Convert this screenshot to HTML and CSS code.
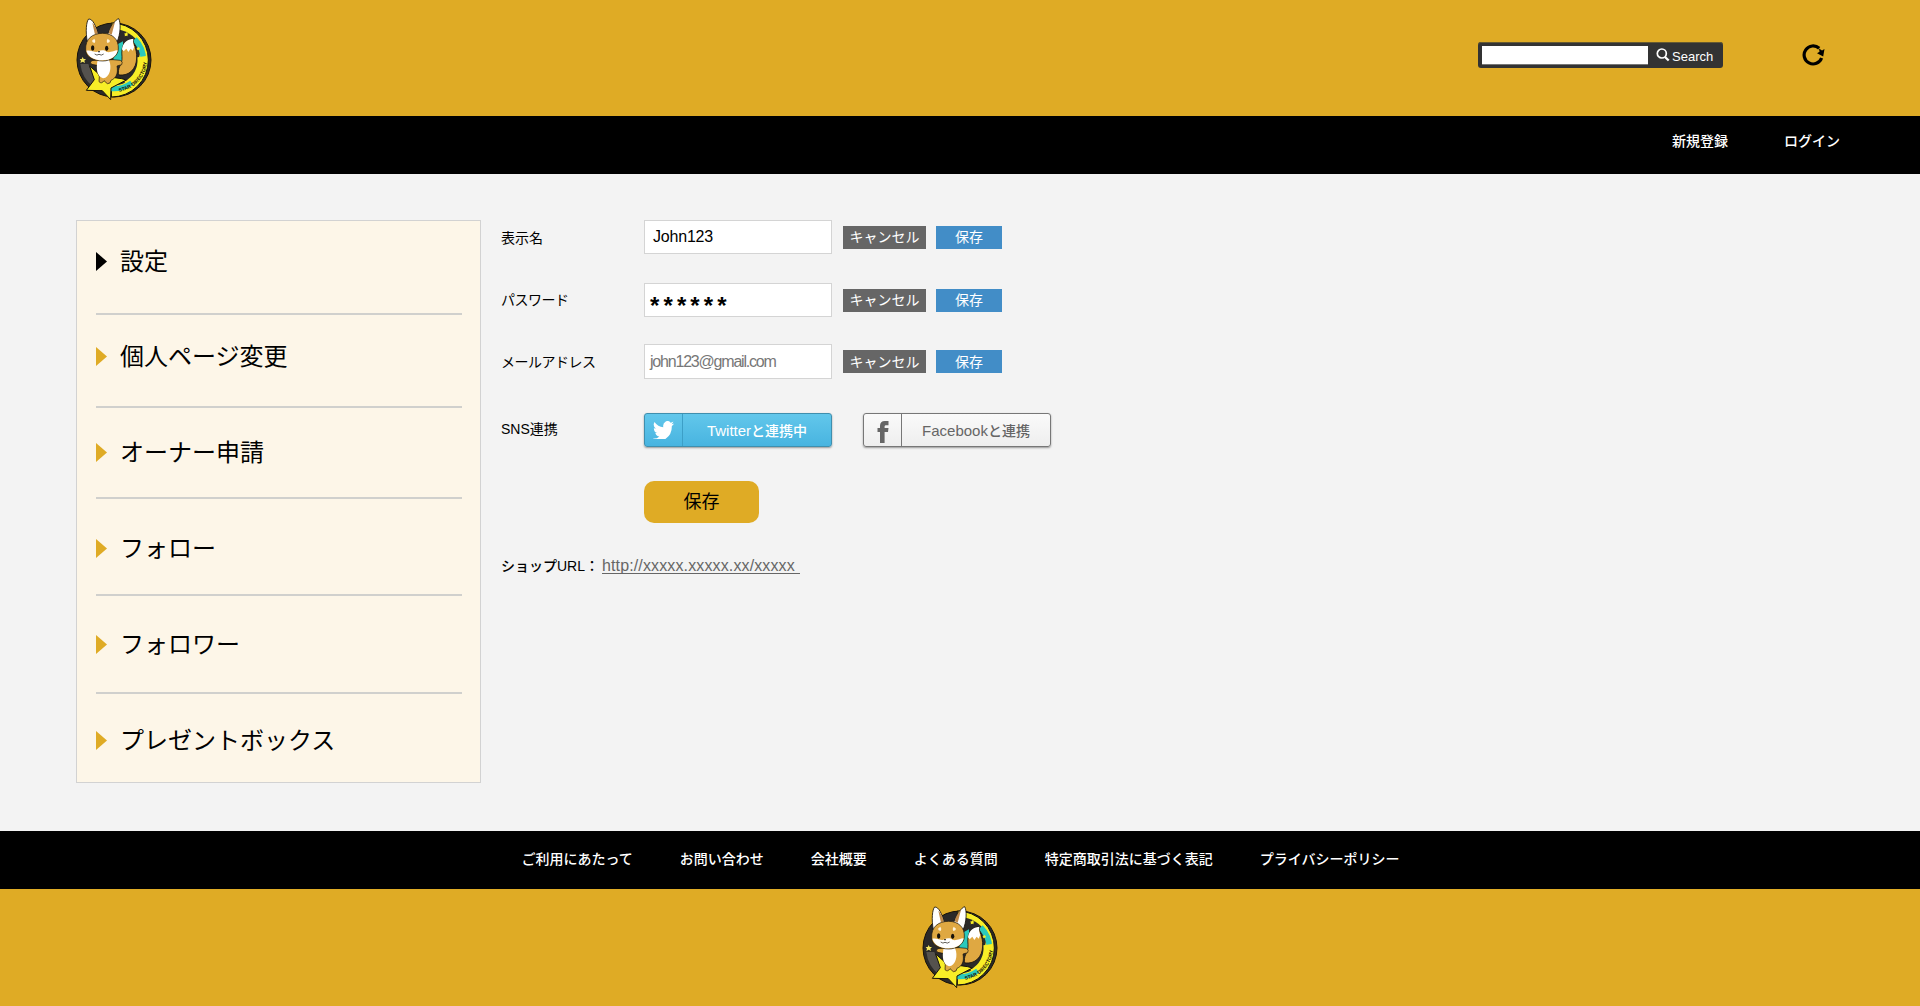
FILE: index.html
```html
<!DOCTYPE html>
<html lang="ja">
<head>
<meta charset="utf-8">
<title>設定</title>
<link rel="stylesheet" href="styles.css">
</head>
<body>
<svg class="defs" width="300" height="310" aria-hidden="true">
  <symbol id="logo" viewBox="46 49 234 252">
    <circle cx="163" cy="178" r="111" fill="#2b2a29" stroke="#17120a" stroke-width="3"/>
    <path d="M62 190A102 102 0 0 0 100 258L118 235A76 76 0 0 1 86 190Z" fill="#55524e"/>
    <path d="M155 67A111 111 0 0 1 155 289Z" fill="#f8ee27" stroke="#17120a" stroke-width="3"/>
    <path d="M155 86A93 93 0 0 1 245 138L230 210A76 76 0 0 1 155 254Z" fill="#2b2a29"/>
    <path d="M225 116A88 88 0 0 1 251 178" fill="none" stroke="#2bc9bd" stroke-width="17"/>
    <path d="M246 168A84 84 0 0 1 200 254" fill="none" stroke="#f8ee27" stroke-width="26"/>
    <path d="M152 264C178 266 200 258 216 246" fill="none" stroke="#2bc9bd" stroke-width="15"/>
    <path d="M160 138L190 122V180L162 186Z" fill="#2bc9bd"/>
    <path id="logo-arc" d="M178 273A98 98 0 0 0 259 150" fill="none"/>
    <text class="logo-text"><textPath href="#logo-arc">STAR DIRECTORY</textPath></text>
    <path d="M69 169l3 6 7 0-5 5 2 7-7-4-7 4 2-7-4-5 6 0z" fill="#f5e860"/>
    <path d="M200 94l2 4 5 1-4 3 1 5-4-2-5 2 1-5-3-3 5-1z" fill="#f8ee27"/>
    <path d="M236 138l2 3 4 1-3 3 1 4-4-2-4 2 1-4-3-3 4-1z" fill="#f8ee27"/>
    <path d="M90 196L123 225 186 234 200 238 154 262 153 297 128 270 80 269 104 237Z" fill="#f8ee27" stroke="#17120a" stroke-width="3" stroke-linejoin="round"/>
    <path d="M176 218C176 192 188 196 187 168C184 138 192 118 220 114C220 130 232 142 231 172C230 206 208 226 178 223Z" fill="#dfa842" stroke="#17120a" stroke-width="2.500"/>
    <path d="M187 146C189 128 201 116 221 114C219 124 221 132 224 138L219 150 213 144 206 154 200 144 192 152Z" fill="#fff"/>
    <path d="M83 124C77 92 80 62 87 55C99 54 109 76 115 99L146 98C154 76 168 56 177 54C184 66 183 100 172 124Z" fill="#fff" stroke="#17120a" stroke-width="2.500" stroke-linejoin="round"/>
    <path d="M98 66Q111 80 114 98L106 102ZM166 64Q151 78 147 98L156 102Z" fill="#c08a48"/>
    <path d="M112 178L96 180Q89 186 96 191L112 194Q110 214 119 228L118 243Q126 251 133 240L143 249Q153 250 154 239C170 232 176 218 172 196L186 192Q191 184 182 179L160 177Z" fill="#dfa842" stroke="#17120a" stroke-width="2"/>
    <path d="M114 178C108 206 112 227 130 233C150 232 158 200 148 178Z" fill="#fff"/>
    <path d="M78 148C76 114 99 98 129 98C158 98 178 116 176 145C175 166 154 181 129 181C102 181 79 168 78 148Z" fill="#dfa842" stroke="#17120a" stroke-width="2"/>
    <path d="M80 150C93 146 108 158 116 152C124 148 135 148 140 153C151 158 166 148 174 149C170 169 152 179 129 179C105 179 86 170 80 150Z" fill="#fff"/>
    <path d="M104 114q5 6 1 13q-8-2-8-7zM144 114q-5 6-1 13q8-2 8-7z" fill="#fff4dc"/>
    <ellipse cx="99" cy="142" rx="5" ry="8" fill="#17120a"/>
    <ellipse cx="141" cy="143" rx="5" ry="8" fill="#17120a"/>
    <path d="M105 160q7 6 13 1q7 5 14-1" fill="none" stroke="#17120a" stroke-width="2"/>
    <ellipse cx="118" cy="153" rx="3" ry="2" fill="#17120a"/>
  </symbol>
</svg>

<header class="header">
  <a class="logo" href="#"><svg width="78" height="84"><use href="#logo"/></svg></a>
  <div class="tools">
    <form class="search">
      <input class="search-input" type="text" aria-label="Search">
      <button class="search-button" type="button">
        <svg width="14" height="14" viewBox="0 0 14 14" fill="none" stroke="#fff" stroke-width="1.7"><circle cx="5.8" cy="5.5" r="4.5"/><path d="M9 9l3.7 3.5" stroke-width="2.3"/></svg>
        <span>Search</span>
      </button>
    </form>
    <svg class="refresh" width="24" height="22" viewBox="0 0 24 22"><path d="M17.2 4.3A9 9 0 1 0 19.6 14" fill="none" stroke="#000" stroke-width="3.2"/><path d="M22.500 5L21.2 12.5 15 9.2 17.5 7.8 17 4.6 20 6.5Z" fill="#000"/></svg>
  </div>
</header>
<nav class="topnav">
  <a href="#">新規登録</a>
  <a href="#">ログイン</a>
</nav>

<main class="main">
  <ul class="sidebar">
    <li class="item item-1 active"><a href="#">設定</a></li>
    <li class="item item-2"><a href="#">個人ページ変更</a></li>
    <li class="item item-3"><a href="#">オーナー申請</a></li>
    <li class="item item-4"><a href="#">フォロー</a></li>
    <li class="item item-5"><a href="#">フォロワー</a></li>
    <li class="item item-6"><a href="#">プレゼントボックス</a></li>
  </ul>

  <section class="settings">
    <div class="row row-name">
      <span class="label">表示名</span>
      <div class="field name">John123</div>
      <button class="btn cancel">キャンセル</button>
      <button class="btn save">保存</button>
    </div>
    <div class="row row-password">
      <span class="label kana">パスワード</span>
      <div class="field password">******</div>
      <button class="btn cancel">キャンセル</button>
      <button class="btn save">保存</button>
    </div>
    <div class="row row-mail">
      <span class="label kana">メールアドレス</span>
      <div class="field mail">john123@gmail.com</div>
      <button class="btn cancel">キャンセル</button>
      <button class="btn save">保存</button>
    </div>
    <div class="row row-sns">
      <span class="label sns-label">SNS連携</span>
      <a class="sns twitter" href="#">
        <span class="sns-icon"><svg width="21" height="18" viewBox="0 0 24 18" preserveAspectRatio="none"><path d="M24 2.4a9.6 9.6 0 0 1-2.8.8A5 5 0 0 0 23.3.5a9.700 9.700 0 0 1-3.100 1.200 4.900 4.900 0 0 0-8.400 4.500A14 14 0 0 1 1.700 1 4.900 4.900 0 0 0 3.200 7.600 4.900 4.900 0 0 1 1 7a4.900 4.900 0 0 0 3.900 4.900 4.900 4.900 0 0 1-2.200.1 4.900 4.900 0 0 0 4.600 3.400A9.900 9.900 0 0 1 0 17.500 14 14 0 0 0 21.500 5.100 10 10 0 0 0 24 2.400z" fill="#fff"/></svg></span>
        <span class="sns-text"><span class="latin">Twitter</span>と連携中</span>
      </a>
      <a class="sns facebook" href="#">
        <span class="sns-icon"><svg width="12" height="22" viewBox="0 0 12 22" preserveAspectRatio="none"><path d="M3 22V11H.5V7H3V4.800C3 1.500 4.800 0 7.800 0H11.500V4.200H9.200C8 4.200 7.600 4.700 7.600 5.700V7H11.500L11 11H7.600V22Z" fill="#666"/></svg></span>
        <span class="sns-text"><span class="latin">Facebook</span>と連携</span>
      </a>
    </div>
    <button class="submit">保存</button>
    <p class="shop"><span class="shop-label">ショップURL：</span><a href="#">http://xxxxx.xxxxx.xx/xxxxx</a></p>
  </section>
</main>

<nav class="footnav">
  <a href="#">ご利用にあたって</a>
  <a href="#">お問い合わせ</a>
  <a href="#">会社概要</a>
  <a href="#">よくある質問</a>
  <a href="#">特定商取引法に基づく表記</a>
  <a href="#">プライバシーポリシー</a>
</nav>
<footer class="footer"><svg width="78" height="84"><use href="#logo"/></svg></footer>
</body>
</html>
```
FILE: styles.css
```css
* { box-sizing: border-box; }
body {
  margin: 0;
  height: 1006px;
  overflow: hidden;
  background: #f3f3f3;
  color: #000;
  font: 14px/20px "Liberation Sans", "Noto Sans CJK JP", sans-serif;
}
a { color: inherit; text-decoration: none; }
button { border: 0; padding: 0; margin: 0; font: inherit; }
.defs { position: absolute; }
.logo-text { font: bold 15px "Liberation Sans", sans-serif; fill: #17120a; }

.header {
  display: flex;
  justify-content: space-between;
  height: 116px;
  padding: 17px 94px 0 75px;
  background: #dfab25;
}
.tools { display: flex; align-items: flex-start; padding-top: 25px; }
.search {
  display: flex;
  width: 245px;
  height: 26px;
  padding: 4px;
  background: #333;
  border-radius: 3px;
  box-shadow: inset 0 1px #665a32;
}
.search-input {
  width: 166px;
  height: 19px;
  padding: 0 4px;
  border: 0;
  border-bottom: 1px solid #777;
  border-radius: 0;
  background: #fff;
}
.search-button {
  display: flex;
  gap: 2px;
  height: 19px;
  padding: 2px 0 0 8px;
  background: none;
  color: #fff;
  font: 13px/18px "Liberation Sans", sans-serif;
}
.refresh { margin: 2px 0 0 79px; }

.topnav {
  display: flex;
  justify-content: flex-end;
  gap: 56px;
  height: 58px;
  padding: 15px 80px 0 0;
  background: #000;
  color: #fff;
  font-weight: 500;
}

.main { display: flex; height: 657px; padding: 46px 0 0 76px; }
.sidebar {
  width: 405px;
  height: 563px;
  margin: 0;
  padding: 0 18px 0 19px;
  list-style: none;
  background: #fdf6e8;
  border: 1px solid #d2d2d2;
}
.item {
  border-bottom: 2px solid #d0d0cd;
  font-size: 24px;
  line-height: 36px;
}
.item a { display: flex; align-items: center; gap: 13px; }
.item a::before {
  content: "";
  width: 11px;
  height: 19px;
  margin-top: -1px;
  background: #dfab25;
  clip-path: polygon(0 0, 100% 50%, 0 100%);
}
.active a::before { background: #000; }
.item-1 { height: 94px; padding-top: 23px; }
.item-2 { height: 93px; padding-top: 24px; }
.item-3 { height: 91px; padding-top: 27px; }
.item-4 { height: 97px; padding-top: 32px; }
.item-5 { height: 98px; padding-top: 31px; }
.item-6 { height: 88px; padding-top: 29px; border: 0; }

.settings { padding-left: 20px; }
.row { display: flex; align-items: center; height: 34px; }
.row-name .label { padding-top: 2px; }
.row-password { margin-top: 29px; }
.row-mail { margin-top: 27px; height: 35px; }
.row-sns { margin-top: 34px; }
.label { width: 143px; white-space: nowrap; }
.kana { letter-spacing: -.5px; }
.sns-label { padding-bottom: 2px; }
.latin { font-size: 15px; }
.field {
  width: 188px;
  height: 100%;
  padding-left: 8px;
  border: 1px solid #d4d4d4;
  background: #fff;
  font-size: 16px;
  line-height: 32px;
}
.name { letter-spacing: -.2px; }
.password { padding-left: 5px; font-weight: bold; font-size: 24px; line-height: 43px; letter-spacing: 4.100px; }
.mail { padding-left: 5px; color: #777; letter-spacing: -1.200px; line-height: 34px; }
.btn { height: 23px; color: #fff; line-height: 22px; }
.cancel { width: 83px; margin-left: 11px; background: #666; }
.save { width: 66px; margin-left: 10px; background: #428dc7; }

.sns {
  display: flex;
  width: 188px;
  height: 34px;
  border: 1px solid #3f8fae;
  border-radius: 3px;
  box-shadow: 0 1px 2px #999;
}
.twitter { background: linear-gradient(#62c7eb, #48b4e0); color: #fff; }
.facebook { margin-left: 31px; background: linear-gradient(#fafafa, #eee); border-color: #777; color: #666; }
.sns-icon {
  display: flex;
  align-items: center;
  justify-content: center;
  width: 38px;
  border-right: 1px solid #3c9fc7;
}
.facebook .sns-icon { padding-top: 4px; border-color: #777; }
.sns-text { flex: 1; text-align: center; line-height: 34px; font-weight: 500; white-space: nowrap; }

.submit {
  display: block;
  width: 115px;
  height: 42px;
  margin: 34px 0 0 143px;
  border-radius: 10px;
  background: #dfab25;
  font-size: 18px;
}
.shop { display: flex; margin: 33px 0 0; font-weight: 500; }
.shop-label { width: 101px; white-space: nowrap; }
.shop a { width: 198px; height: 18px; border-bottom: 1px solid #666; color: #666; font-size: 16px; font-weight: 400; letter-spacing: .13px; }

.footnav {
  display: flex;
  justify-content: center;
  gap: 47px;
  height: 58px;
  padding: 18px 0 0 1px;
  background: #000;
  color: #fff;
  font-weight: 500;
}
.footer { display: flex; justify-content: center; height: 117px; padding-top: 16px; background: #dfab25; }
```
